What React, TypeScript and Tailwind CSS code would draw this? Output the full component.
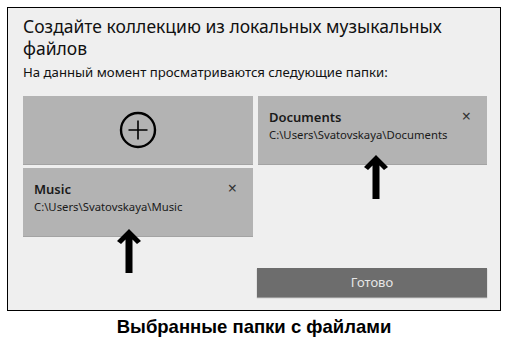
import React from "react"

function Arrow({ className }: { className: string }) {
  return (
    <svg className={className} width="28" height="46" viewBox="0 0 28 46">
      <path d="M14 2 L2 14 L6 17 L10.5 12.5 L10.5 46 L17.5 46 L17.5 12.5 L22 17 L26 14 Z" fill="#000" />
    </svg>
  )
}

function Folder({ name, path }: { name: string; path: string }) {
  return (
    <div className="relative h-[68px] bg-[#b3b3b3] shadow-[0_1px_0_#a3a3a3] pl-[11px] pt-[13px]">
      <div className="text-[13px] font-semibold leading-[16px] text-[#1a1a1a]">{name}</div>
      <div className="text-[11.3px] leading-[16px] mt-[2px] text-[#1a1a1a]">{path}</div>
      <span className="absolute right-[16px] top-[12px] text-[16px] leading-[16px] text-[#333]">×</span>
    </div>
  )
}

export default function App() {
  return (
    <div className="relative w-[508px] h-[341px] bg-white overflow-hidden" style={{ fontFamily: '"Noto Sans", "Open Sans", sans-serif' }}>
      <div className="ml-[7px] mt-[7px] w-[494px] h-[304px] border border-black bg-[#efefef] pl-[15px] pr-[13px]">
        <h1 className="pt-[7px] text-[17.5px] leading-[22px] font-normal text-[#111] whitespace-nowrap">
          Создайте коллекцию из локальных музыкальных
          <br />
          файлов
        </h1>
        <p className="mt-[4px] text-[13.2px] leading-[18px] text-[#111] whitespace-nowrap">На данный момент просматриваются следующие папки:</p>
        <div className="mt-[15px] grid grid-cols-[230px_229px] gap-x-[5px] gap-y-[4px]">
          <div className="h-[68px] bg-[#b3b3b3] shadow-[0_1px_0_#a3a3a3] flex items-center justify-center">
            <svg width="38" height="38" viewBox="0 0 38 38">
              <circle cx="19" cy="19" r="17" fill="none" stroke="#000" strokeWidth="2.4" />
              <path d="M19 9.5 V28.5 M9.5 19 H28.5" stroke="#000" strokeWidth="1.6" />
            </svg>
          </div>
          <Folder name="Documents" path="C:\Users\Svatovskaya\Documents" />
          <Folder name="Music" path="C:\Users\Svatovskaya\Music" />
        </div>
        <div className="mt-[32px] flex justify-end">
          <button className="w-[230px] h-[29px] bg-[#6d6d6d] text-[#e6e6e6] text-[13px] shadow-[0_1px_1px_#999]">Готово</button>
        </div>
      </div>
      <p className="mt-[5px] text-center text-[18.5px] leading-[22px] font-bold text-black" style={{ fontFamily: '"Liberation Sans", Arial, sans-serif' }}>
        Выбранные папки с файлами
      </p>
      <Arrow className="absolute left-[362px] top-[153px]" />
      <Arrow className="absolute left-[115px] top-[227px]" />
    </div>
  )
}
